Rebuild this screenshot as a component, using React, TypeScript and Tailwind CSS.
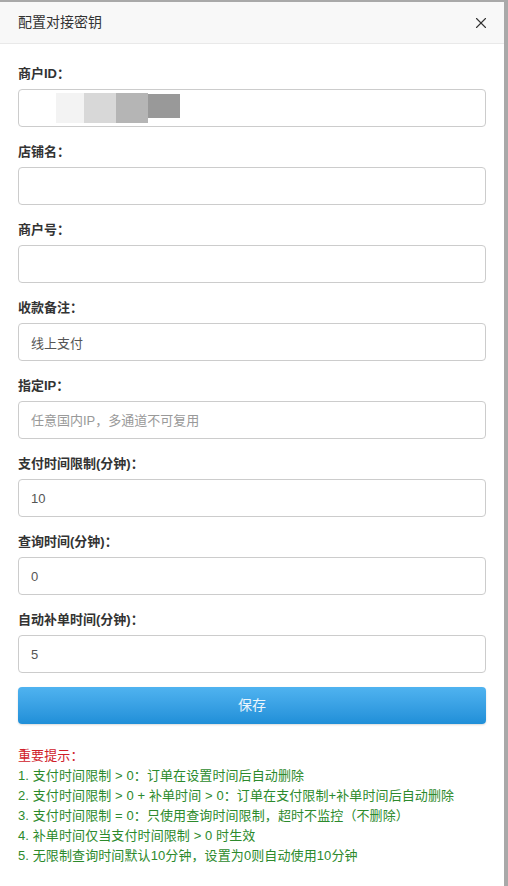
import { X } from 'lucide-react'

const FONT = "font-['Liberation_Sans','Noto_Sans_CJK_SC',sans-serif]"

type Field = { label: string; value?: string; placeholder?: string; masked?: 'id' | 'shop' | 'none' }

const FIELDS: Field[] = [
  { label: '商户ID：', masked: 'id' },
  { label: '店铺名：', masked: 'shop' },
  { label: '商户号：', masked: 'none' },
  { label: '收款备注：', value: '线上支付' },
  { label: '指定IP：', placeholder: '任意国内IP，多通道不可复用' },
  { label: '支付时间限制(分钟)：', value: '10' },
  { label: '查询时间(分钟)：', value: '0' },
  { label: '自动补单时间(分钟)：', value: '5' },
]

const TIPS = [
  '1. 支付时间限制 > 0：订单在设置时间后自动删除',
  '2. 支付时间限制 > 0 + 补单时间 > 0：订单在支付限制+补单时间后自动删除',
  '3. 支付时间限制 = 0：只使用查询时间限制，超时不监控（不删除）',
  '4. 补单时间仅当支付时间限制 > 0 时生效',
  '5. 无限制查询时间默认10分钟，设置为0则自动使用10分钟',
]

function MaskedId() {
  // blurred/redacted merchant id
  return (
    <div className="flex h-full items-center pl-[37px]">
      <span className="h-[30px] w-[28px] bg-[#f3f3f3]" />
      <span className="h-[30px] w-[32px] bg-[#d8d8d8]" />
      <span className="h-[30px] w-[32px] bg-[#b5b5b5]" />
      <span className="mt-[4px] h-[24px] w-[32px] self-start bg-[#999]" />
    </div>
  )
}

export default function App() {
  return (
    <div className={`${FONT} h-[886px] w-[508px] overflow-hidden bg-[#a9a9a9] pt-[2px] pr-[4px]`}>
      <div className="h-full bg-white">
        <div className="flex h-[42px] items-center justify-between border-b border-[#e9e9e9] bg-[#f8f8f8] pl-[18px] pr-[14px]">
          <span className="text-[14px] text-[#333]">配置对接密钥</span>
          <X className="h-[18px] w-[18px] text-[#333]" strokeWidth={1.5} />
        </div>

        <div className="px-[18px] pt-[20px]">
          {FIELDS.map((f) => (
            <div key={f.label} className="mb-[15px]">
              <div className="mb-[5px] h-[20px] text-[13px] font-bold leading-[20px] text-[#333]">{f.label}</div>
              <div className="h-[38px] w-[468px] overflow-hidden rounded-[4px] border border-[#ccc] bg-white">
                {f.masked === 'id' ? (
                  <MaskedId />
                ) : f.masked ? null : (
                  <input
                    className="h-full w-full bg-transparent px-[12px] text-[13px] text-[#555] outline-none placeholder:text-[#999]"
                    defaultValue={f.value}
                    placeholder={f.placeholder}
                  />
                )}
              </div>
            </div>
          ))}

          <button className="mt-[-1px] h-[37px] w-[468px] rounded-[4px] bg-gradient-to-b from-[#4fb3f0] to-[#1f8fd8] text-[14px] text-white/90 shadow-[0_1px_2px_rgba(0,0,0,0.15)]">
            保存
          </button>

          <div className="mt-[22px] text-[13px] leading-[20px] tracking-[0.1px]">
            <div className="text-[#d0202a]">重要提示：</div>
            {TIPS.map((t) => (
              <div key={t} className="whitespace-nowrap text-[#2c8a2c]">{t}</div>
            ))}
          </div>
        </div>
      </div>
    </div>
  )
}
